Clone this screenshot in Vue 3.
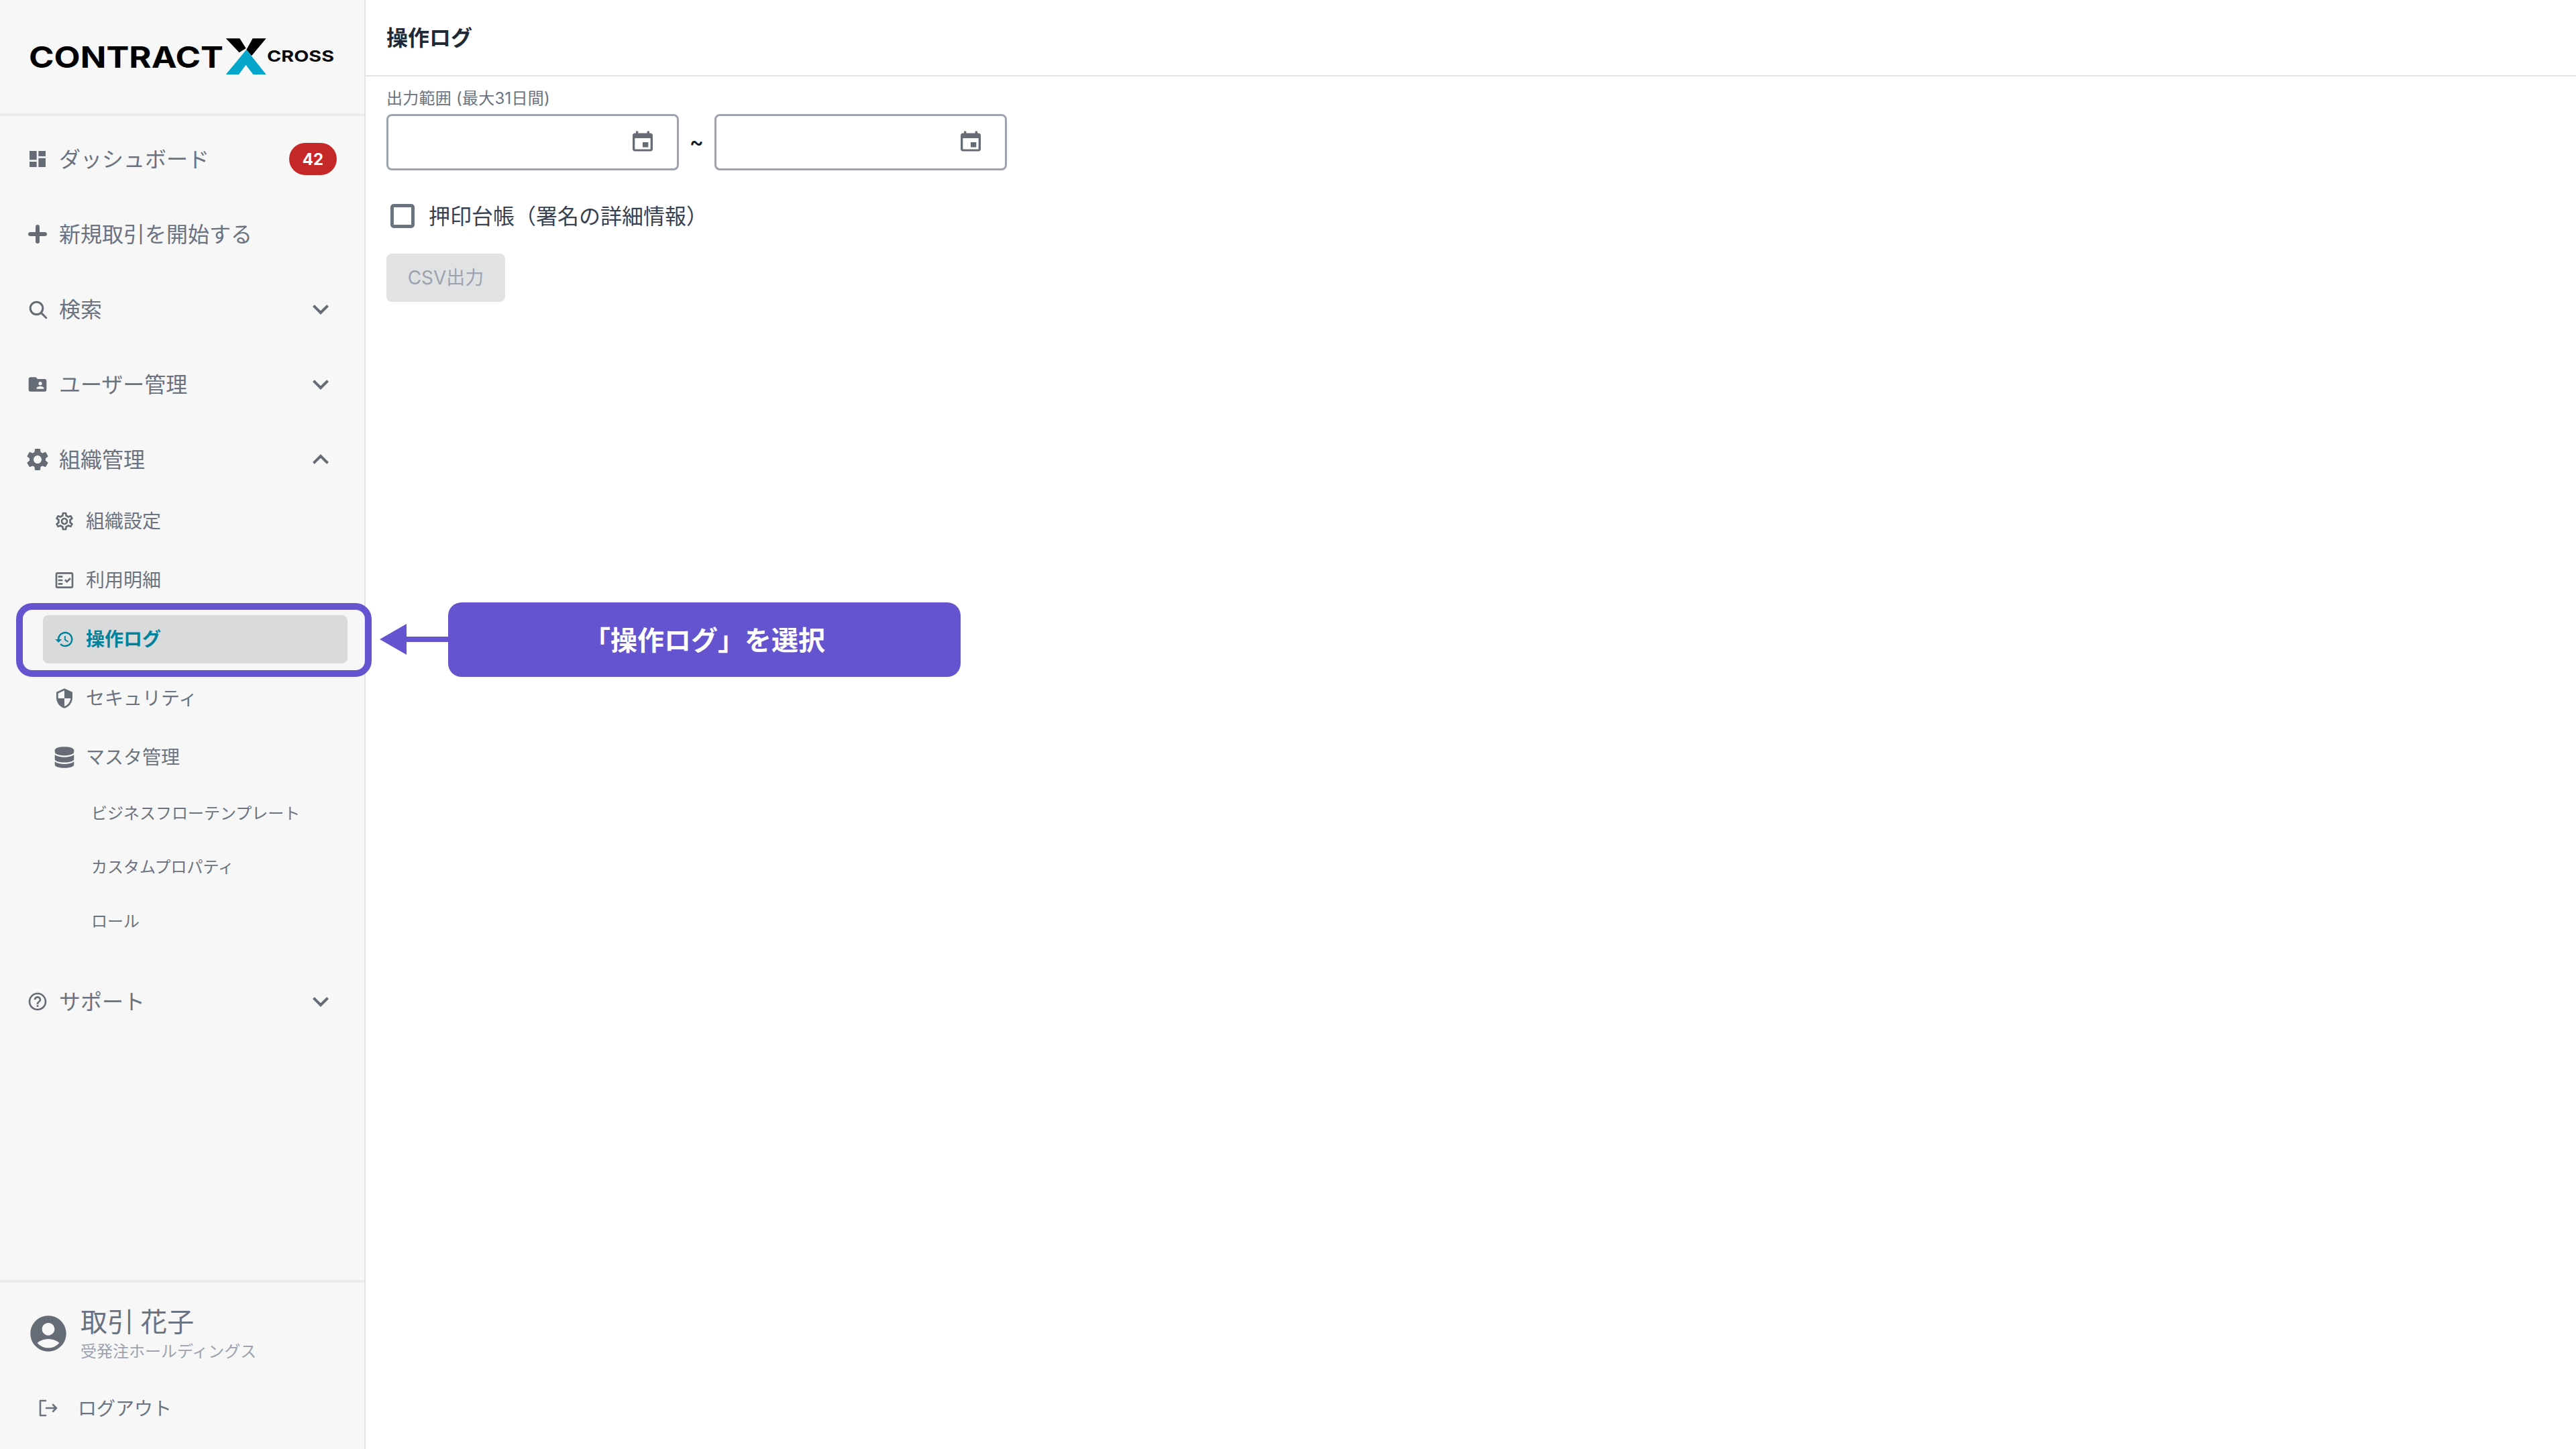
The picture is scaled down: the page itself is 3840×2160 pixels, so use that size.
<script setup>
const P = {
  dashboard: 'M3 13h8V3H3v10zm0 8h8v-6H3v6zm10 0h8V11h-8v10zm0-18v6h8V3h-8z',
  search: 'M11 4.8a6.2 6.2 0 1 0 0 12.4 6.2 6.2 0 1 0 0-12.4zM15.6 15.6l4.9 4.9',
  folder: 'M20 6h-8l-2-2H4c-1.1 0-1.99.9-1.99 2L2 18c0 1.1.9 2 2 2h16c1.1 0 2-.9 2-2V8c0-1.1-.9-2-2-2zm-5 3c1.1 0 2 .9 2 2s-.9 2-2 2-2-.9-2-2 .9-2 2-2zm4 8h-8v-1c0-1.33 2.67-2 4-2s4 .67 4 2v1z',
  gear: 'M19.14 12.94c.04-.3.06-.61.06-.94 0-.32-.02-.64-.07-.94l2.03-1.58c.18-.14.23-.41.12-.61l-1.92-3.32c-.12-.22-.37-.29-.59-.22l-2.39.96c-.5-.38-1.03-.7-1.62-.94l-.36-2.54c-.04-.24-.24-.41-.48-.41h-3.84c-.24 0-.43.17-.47.41l-.36 2.54c-.59.24-1.13.57-1.62.94l-2.39-.96c-.22-.08-.47 0-.59.22L2.74 8.87c-.12.21-.08.47.12.61l2.03 1.58c-.05.3-.09.63-.09.94s.02.64.07.94l-2.03 1.58c-.18.14-.23.41-.12.61l1.92 3.32c.12.22.37.29.59.22l2.39-.96c.5.38 1.03.7 1.62.94l.36 2.54c.05.24.24.41.48.41h3.84c.24 0 .44-.17.47-.41l.36-2.54c.59-.24 1.13-.56 1.62-.94l2.39.96c.22.08.47 0 .59-.22l1.92-3.32c.12-.22.07-.47-.12-.61l-2.01-1.58zM12 15.6c-1.98 0-3.6-1.62-3.6-3.6s1.62-3.6 3.6-3.6 3.6 1.62 3.6 3.6-1.62 3.6-3.6 3.6z',
  gearOutline: 'M19.43 12.98c.04-.32.07-.64.07-.98 0-.34-.03-.66-.07-.98l2.11-1.65c.19-.15.24-.42.12-.64l-2-3.46c-.09-.16-.26-.25-.44-.25-.06 0-.12.01-.17.03l-2.49 1c-.52-.4-1.08-.73-1.69-.98l-.38-2.65C14.46 2.18 14.25 2 14 2h-4c-.25 0-.46.18-.49.42l-.38 2.65c-.61.25-1.17.59-1.69.98l-2.49-1c-.06-.02-.12-.03-.18-.03-.17 0-.34.09-.43.25l-2 3.46c-.13.22-.07.49.12.64l2.11 1.65c-.04.32-.07.65-.07.98 0 .33.03.66.07.98l-2.11 1.65c-.19.15-.24.42-.12.64l2 3.46c.09.16.26.25.44.25.06 0 .12-.01.17-.03l2.49-1c.52.4 1.08.73 1.69.98l.38 2.65c.03.24.24.42.49.42h4c.25 0 .46-.18.49-.42l.38-2.65c.61-.25 1.17-.59 1.69-.98l2.49 1c.06.02.12.03.18.03.17 0 .34-.09.43-.25l2-3.46c.12-.22.07-.49-.12-.64l-2.11-1.65zm-1.98-1.71c.04.31.05.52.05.73 0 .21-.02.43-.05.73l-.14 1.13.89.7 1.08.84-.7 1.21-1.27-.51-1.04-.42-.9.68c-.43.32-.84.56-1.25.73l-1.06.43-.16 1.13-.2 1.35h-1.4l-.19-1.35-.16-1.13-1.06-.43c-.43-.18-.83-.41-1.23-.71l-.91-.7-1.06.43-1.27.51-.7-1.21 1.08-.84.89-.7-.14-1.13c-.03-.31-.05-.54-.05-.74s.02-.43.05-.73l.14-1.13-.89-.7-1.08-.84.7-1.21 1.27.51 1.04.42.9-.68c.43-.32.84-.56 1.25-.73l1.06-.43.16-1.13.2-1.35h1.39l.19 1.35.16 1.13 1.06.43c.43.18.83.41 1.23.71l.91.7 1.06-.43 1.27-.51.7 1.21-1.07.85-.89.7.14 1.13zM12 8c-2.21 0-4 1.79-4 4s1.79 4 4 4 4-1.79 4-4-1.79-4-4-4zm0 6c-1.1 0-2-.9-2-2s.9-2 2-2 2 .9 2 2-.9 2-2 2z',
  fact: 'M20 3H4c-1.1 0-2 .9-2 2v14c0 1.1.9 2 2 2h16c1.1 0 2-.9 2-2V5c0-1.1-.9-2-2-2zm0 16H4V5h16v14zM19.41 10.42l-1.42-1.42-3.17 3.17-1.41-1.42L12 12.16 14.82 15zM5 7h5v2H5zM5 11h5v2H5zM5 15h5v2H5z',
  history: 'M13 3c-4.97 0-9 4.03-9 9H1l3.89 3.89.07.14L9 12H6c0-3.87 3.13-7 7-7s7 3.13 7 7-3.13 7-7 7c-1.93 0-3.68-.79-4.94-2.06l-1.42 1.42C8.27 19.99 10.51 21 13 21c4.97 0 9-4.03 9-9s-4.03-9-9-9zm-1 5v5l4.28 2.54.72-1.21-3.5-2.08V8H12z',
  shield: 'M12 1L3 5v6c0 5.55 3.84 10.74 9 12 5.16-1.26 9-6.45 9-12V5l-9-4zm0 10.99h7c-.53 4.12-3.28 7.79-7 8.94V12H5V6.3l7-3.11v8.8z',
  help: 'M11 18h2v-2h-2v2zm1-16C6.48 2 2 6.48 2 12s4.48 10 10 10 10-4.48 10-10S17.52 2 12 2zm0 18c-4.41 0-8-3.59-8-8s3.59-8 8-8 8 3.59 8 8-3.59 8-8 8zm0-14c-2.21 0-4 1.79-4 4h2c0-1.1.9-2 2-2s2 .9 2 2c0 2-3 1.75-3 5h2c0-2.25 3-2.5 3-5 0-2.21-1.79-4-4-4z',
  plus: 'M10 4.7a2 2 0 0 1 4 0V10h5.3a2 2 0 0 1 0 4H14v5.3a2 2 0 0 1-4 0V14H4.7a2 2 0 0 1 0-4H10z',
  db: 'M3 5.2C3 3.2 7 2 12 2s9 1.2 9 3.2V7c0 2-4 3.3-9 3.3S3 9 3 7zM3 9.5c2 1.6 5.4 2.3 9 2.3s7-.7 9-2.3v4c0 2-4 3.2-9 3.2s-9-1.2-9-3.2zM3 16c2 1.6 5.4 2.3 9 2.3s7-.7 9-2.3v2.8c0 2-4 3.2-9 3.2s-9-1.2-9-3.2z',
  down: 'M16.59 8.59L12 13.17 7.41 8.59 6 10l6 6 6-6z',
  up: 'M12 8l-6 6 1.41 1.41L12 10.83l4.59 4.58L18 14z',
  event: 'M17 12h-5v5h5v-5zM16 1v2H8V1H6v2H5c-1.11 0-1.99.9-1.99 2L3 19c0 1.1.89 2 2 2h14c1.1 0 2-.9 2-2V5c0-1.1-.9-2-2-2h-1V1h-2zm3 18H5V8h14v11z',
  account: 'M12 2C6.48 2 2 6.48 2 12s4.48 10 10 10 10-4.48 10-10S17.52 2 12 2zm0 4c1.93 0 3.5 1.57 3.5 3.5S13.93 13 12 13s-3.5-1.57-3.5-3.5S10.07 6 12 6zm0 14c-2.03 0-4.43-.82-6.14-2.88C7.55 15.8 9.68 15 12 15s4.45.8 6.14 2.12C16.43 19.18 14.03 20 12 20z'
}
const top = [
  { label: 'ダッシュボード', icon: P.dashboard, size: 32, badge: '42' },
  { label: '新規取引を開始する', icon: P.plus, size: 36 },
  { label: '検索', icon: P.search, size: 36, line: true, chevron: P.down },
  { label: 'ユーザー管理', icon: P.folder, size: 32, chevron: P.down },
  { label: '組織管理', icon: P.gear, size: 40, chevron: P.up }
]
const subs = [
  { label: '組織設定', icon: P.gearOutline, size: 32 },
  { label: '利用明細', icon: P.fact, size: 32 },
  { label: '操作ログ', icon: P.history, size: 30, active: true },
  { label: 'セキュリティ', icon: P.shield, size: 32 },
  { label: 'マスタ管理', icon: P.db, size: 38 }
]
const masters = ['ビジネスフローテンプレート', 'カスタムプロパティ', 'ロール']
</script>

<template>
  <div class="page">
    <aside class="sidebar">
      <div class="brand">
        <svg class="logo" width="544" height="169" viewBox="0 0 544 169" role="img" aria-label="CONTRACT X CROSS">
          <text x="43" y="100.5" textLength="290" lengthAdjust="spacingAndGlyphs" class="logo-main">CONTRACT</text>
          <text x="398" y="92" textLength="100" lengthAdjust="spacingAndGlyphs" class="logo-sub">CROSS</text>
          <polygon fill="#000" points="336.7,57.3 357.3,57.3 366.7,72 356.7,78.3" />
          <polygon fill="#000" points="376.7,57.3 396.7,57.3 375,83.3 367.3,74" />
          <polygon fill="#05a6cb" points="336.7,111 356,111 366.5,96.7 377.3,111 396.7,111 367.3,74" />
        </svg>
      </div>

      <nav class="nav">
        <a v-for="item in top" :key="item.label" class="row">
          <span class="icon-slot">
            <svg :class="{ line: item.line }" :width="item.size" :height="item.size" viewBox="0 0 24 24"><path :d="item.icon" /></svg>
          </span>
          <span class="row-label">{{ item.label }}</span>
          <span v-if="item.badge" class="badge">{{ item.badge }}</span>
          <svg v-if="item.chevron" class="chevron" width="48" height="48" viewBox="0 0 24 24"><path :d="item.chevron" /></svg>
        </a>

        <div class="subs">
          <a v-for="sub in subs" :key="sub.label" class="sub" :class="{ active: sub.active }">
            <span class="sub-icon">
              <svg :width="sub.size" :height="sub.size" viewBox="0 0 24 24"><path :d="sub.icon" /></svg>
            </span>
            <span class="sub-label">{{ sub.label }}</span>
          </a>
        </div>

        <div class="masters">
          <a v-for="m in masters" :key="m" class="master">{{ m }}</a>
        </div>

        <a class="row">
          <span class="icon-slot">
            <svg width="32" height="32" viewBox="0 0 24 24"><path :d="P.help" /></svg>
          </span>
          <span class="row-label">サポート</span>
          <svg class="chevron" width="48" height="48" viewBox="0 0 24 24"><path :d="P.down" /></svg>
        </a>
      </nav>

      <footer class="account">
        <div class="user">
          <svg class="avatar" width="64" height="64" viewBox="0 0 24 24"><path :d="P.account" /></svg>
          <div class="user-text">
            <div class="user-name">取引 花子</div>
            <div class="user-org">受発注ホールディングス</div>
          </div>
        </div>
        <a class="logout">
          <svg class="line-logout" width="28" height="26" viewBox="0 0 28 26">
            <path d="M10 2H2v22h8M11 13h15M21 8l5 5-5 5" />
          </svg>
          <span>ログアウト</span>
        </a>
      </footer>
    </aside>

    <main class="main">
      <header class="head"><h1>操作ログ</h1></header>
      <section class="form">
        <label class="field-label">出力範囲 (最大31日間)</label>
        <div class="range">
          <div class="date"><svg class="cal" width="40" height="36" viewBox="0 0 24 24" preserveAspectRatio="none"><path :d="P.event" /></svg></div>
          <span class="tilde">~</span>
          <div class="date"><svg class="cal" width="40" height="36" viewBox="0 0 24 24" preserveAspectRatio="none"><path :d="P.event" /></svg></div>
        </div>
        <div class="check">
          <span class="box"></span>
          <span class="check-label">押印台帳（署名の詳細情報）</span>
        </div>
        <button class="csv" disabled>CSV出力</button>
      </section>
    </main>

    <div class="mark"></div>
    <svg class="arrow" width="102" height="46" viewBox="0 0 102 46">
      <path d="M0 23 40 0V19H102V27H40V46z" />
    </svg>
    <div class="callout">「操作ログ」を選択</div>
  </div>
</template>

<style>
html, body { margin: 0; background: #fff; }
</style>

<style scoped>
.page {
  position: relative;
  display: flex;
  width: 3840px;
  height: 2160px;
  overflow: hidden;
  font-family: Inter, "Noto Sans CJK JP", sans-serif;
  color: #6b7280;
}
.sidebar {
  display: flex;
  flex-direction: column;
  flex: none;
  width: 545px;
  box-sizing: border-box;
  background: #f7f7f7;
  border-right: 2px solid #e3e3e3;
}
.brand { height: 169px; border-bottom: 4px solid #ebebeb; }
.logo { display: block; }
.logo-main { font: 700 44px Inter, sans-serif; fill: #000; }
.logo-sub { font: 700 23.5px Inter, sans-serif; fill: #0a0a0a; }
.nav { display: flex; flex-direction: column; padding-top: 8px; }
.row {
  display: flex;
  align-items: center;
  height: 112px;
  font-size: 32px;
}
.icon-slot {
  display: flex;
  justify-content: center;
  align-items: center;
  width: 32px;
  margin: 0 16px 0 40px;
}
svg { flex: none; }
svg path { fill: #656c75; }
svg.line path {
  fill: none;
  stroke: #656c75;
  stroke-width: 2;
  stroke-linecap: round;
}
svg.line-logout path {
  fill: none;
  stroke: #6b7280;
  stroke-width: 2.6;
  stroke-linecap: round;
  stroke-linejoin: round;
}
.row-label { flex: 1; padding-bottom: 4px; }
.badge {
  display: flex;
  align-items: center;
  justify-content: center;
  width: 71px;
  height: 48px;
  margin-right: 41px;
  border-radius: 24px;
  background: #c62828;
  color: #fff;
  font-size: 24px;
  font-weight: 700;
}
.chevron { margin-right: 41px; }
.subs {
  display: flex;
  flex-direction: column;
  gap: 16px;
  margin: 0 25px 0 64px;
}
.sub {
  display: flex;
  align-items: center;
  height: 72px;
  border-radius: 8px;
  font-size: 28px;
}
.sub-label { padding-bottom: 4px; }
.sub-icon {
  display: flex;
  justify-content: center;
  align-items: center;
  width: 32px;
  margin: 0 16px 0 16px;
}
.sub.active {
  background: #d9dadc;
  color: #00829b;
  font-weight: 700;
}
.sub.active svg path { fill: #00829b; }
.masters {
  display: flex;
  flex-direction: column;
  gap: 16.5px;
  margin-top: 15px;
  margin-bottom: 32px;
  padding-left: 136px;
}
.master {
  display: flex;
  align-items: center;
  height: 64px;
  box-sizing: border-box;
  padding-bottom: 4px;
  font-size: 24px;
}
.account {
  margin-top: auto;
  border-top: 4px solid #ebebeb;
}
.user {
  display: flex;
  align-items: flex-start;
  height: 134px;
  padding-left: 40px;
  box-sizing: border-box;
}
.avatar { margin-top: 44px; }
.user-text { margin: 35px 0 0 16px; }
.user-name { font-size: 40px; line-height: 48px; word-spacing: -2px; }
.user-org { font-size: 24px; line-height: 36px; margin-top: 2px; color: #9ca3af; }
.logout {
  display: flex;
  align-items: center;
  gap: 30px;
  height: 114px;
  padding-left: 58px;
  box-sizing: border-box;
  font-size: 28px;
  padding-bottom: 8px;
}
.logout span { padding-bottom: 3px; }
.main { flex: 1; min-width: 0; }
.head {
  display: flex;
  align-items: center;
  height: 112px;
  padding-left: 31px;
  border-bottom: 2px solid #e3e5e5;
}
.head h1 {
  margin: 0;
  padding-bottom: 4px;
  font-size: 32px;
  font-weight: 700;
  color: #1f2937;
}
.form {
  display: flex;
  flex-direction: column;
  align-items: flex-start;
  padding: 17px 0 0 31px;
}
.field-label {
  font-size: 24px;
  line-height: 32px;
  margin-bottom: 7px;
  letter-spacing: 0.25px;
}
.range { display: flex; align-items: center; }
.date {
  display: flex;
  align-items: center;
  justify-content: flex-end;
  width: 436px;
  height: 84px;
  box-sizing: border-box;
  padding-right: 31px;
  border: 3px solid #9ca3af;
  border-radius: 8px;
  background: #fff;
}
.tilde {
  width: 53px;
  text-align: center;
  color: #111827;
  font-size: 32px;
  font-weight: 500;
  padding-bottom: 2px;
}
.check {
  display: flex;
  align-items: center;
  gap: 21px;
  height: 56px;
  margin-top: 40px;
  padding-left: 6px;
  font-size: 32px;
  color: #374151;
}
.check-label { padding-bottom: 4px; }
.box {
  width: 36px;
  height: 36px;
  box-sizing: border-box;
  border: 5px solid #6b7280;
  border-radius: 5px;
}
.csv {
  width: 177px;
  height: 72px;
  margin-top: 28px;
  padding: 0 0 4px;
  border: 0;
  border-radius: 8px;
  background: #e1e2e4;
  color: #9ca3af;
  font: inherit;
  font-size: 28px;
}
.mark {
  position: absolute;
  left: 24px;
  top: 899px;
  width: 530px;
  height: 110px;
  box-sizing: border-box;
  border: 10px solid #6554cf;
  border-radius: 24px;
}
.arrow { position: absolute; left: 566px; top: 930px; }
.arrow path { fill: #6554cf; }
.callout {
  position: absolute;
  left: 668px;
  top: 898px;
  display: flex;
  align-items: center;
  justify-content: center;
  width: 764px;
  height: 111px;
  box-sizing: border-box;
  padding-bottom: 4px;
  border-radius: 20px;
  background: #6554cf;
  color: #fff;
  font-size: 40px;
  font-weight: 700;
}
</style>
